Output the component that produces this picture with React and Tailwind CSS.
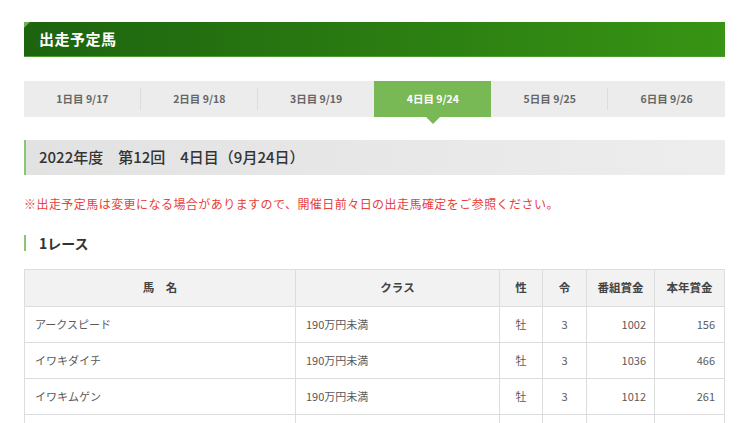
import React from "react";

const tabs = ["1日目 9/17", "2日目 9/18", "3日目 9/19", "4日目 9/24", "5日目 9/25", "6日目 9/26"];
const rows = [
  ["アークスピード", "190万円未満", "牡", "3", "1002", "156"],
  ["イワキダイチ", "190万円未満", "牡", "3", "1036", "466"],
  ["イワキムゲン", "190万円未満", "牡", "3", "1012", "261"],
  ["", "", "", "", "", ""],
];

export default function App() {
  return (
    <div
      className="w-[752px] h-[423px] overflow-hidden bg-white"
      style={{ fontFamily: '"Noto Sans CJK JP", "Noto Sans", sans-serif' }}
    >
      <div className="ml-[24px] w-[701px] pt-[22px]">
        {/* title bar */}
        <div className="relative h-[35px] flex items-center pl-[15px] bg-gradient-to-r from-[#1d640f] to-[#389414] border-b border-[#4a9c2c]">
          <span className="absolute left-0 top-0 w-0 h-0 border-t-[6px] border-r-[6px] border-t-[#6fae5a] border-r-transparent" />
          <span className="text-white text-[15px] font-bold tracking-[0.5px]">出走予定馬</span>
        </div>

        {/* tabs */}
        <div className="mt-[24px] flex h-[36px] bg-[#ececec]">
          {tabs.map((t, i) => {
            const active = i === 3;
            return (
              <div
                key={t}
                className={
                  "relative flex-1 flex items-center justify-center text-[10.5px] font-bold " +
                  (active ? "bg-[#79b955] text-white" : "text-[#666]")
                }
              >
                {t}
                {i < 5 && i !== 2 && i !== 3 && (
                  <span className="absolute right-0 top-[7px] bottom-[7px] w-px bg-[#dcdcdc]" />
                )}
                {active && (
                  <span className="absolute left-1/2 -translate-x-1/2 top-full w-0 h-0 border-l-[7px] border-r-[7px] border-t-[7px] border-l-transparent border-r-transparent border-t-[#79b955]" />
                )}
              </div>
            );
          })}
        </div>

        {/* sub header */}
        <div className="mt-[23px] h-[35px] flex items-center pl-[13px] border-l-2 border-[#8cc576] bg-gradient-to-r from-[#e2e2e2] to-[#ededed]">
          <span className="text-[15px] text-[#333] font-medium">2022年度　第12回　4日目（9月24日）</span>
        </div>

        {/* note */}
        <p className="mt-[21px] text-[12px] leading-[16px] tracking-[0.45px] text-[#e8403a]">
          ※出走予定馬は変更になる場合がありますので、開催日前々日の出走馬確定をご参照ください。
        </p>

        {/* race heading */}
        <div className="mt-[23px] flex items-center h-[16px] border-l-2 border-[#8cc576] pl-[13px]">
          <span className="text-[14px] font-bold text-[#333]">1レース</span>
        </div>

        {/* table */}
        <table className="mt-[18px] w-[700px] border-collapse table-fixed">
          <colgroup>
            <col className="w-[271px]" />
            <col className="w-[204px]" />
            <col className="w-[43px]" />
            <col className="w-[44px]" />
            <col className="w-[68px]" />
            <col className="w-[70px]" />
          </colgroup>
          <thead>
            <tr className="h-[37px] bg-[#f2f2f2] text-[#444] text-[11.5px]">
              <th className="border border-[#dddddd] font-semibold">馬　名</th>
              <th className="border border-[#dddddd] font-semibold">クラス</th>
              <th className="border border-[#dddddd] font-semibold">性</th>
              <th className="border border-[#dddddd] font-semibold">令</th>
              <th className="border border-[#dddddd] font-semibold">番組賞金</th>
              <th className="border border-[#dddddd] font-semibold">本年賞金</th>
            </tr>
          </thead>
          <tbody className="text-[#5a5a5a] text-[11px]">
            {rows.map((r, i) => (
              <tr key={i} className="h-[36px]">
                <td className="border border-[#dddddd] pl-[10px]">{r[0]}</td>
                <td className="border border-[#dddddd] pl-[10px]">{r[1]}</td>
                <td className="border border-[#dddddd] text-center">{r[2]}</td>
                <td className="border border-[#dddddd] text-center">{r[3]}</td>
                <td className="border border-[#dddddd] text-right pr-[8px]">{r[4]}</td>
                <td className="border border-[#dddddd] text-right pr-[9px]">{r[5]}</td>
              </tr>
            ))}
          </tbody>
        </table>
      </div>
    </div>
  );
}
